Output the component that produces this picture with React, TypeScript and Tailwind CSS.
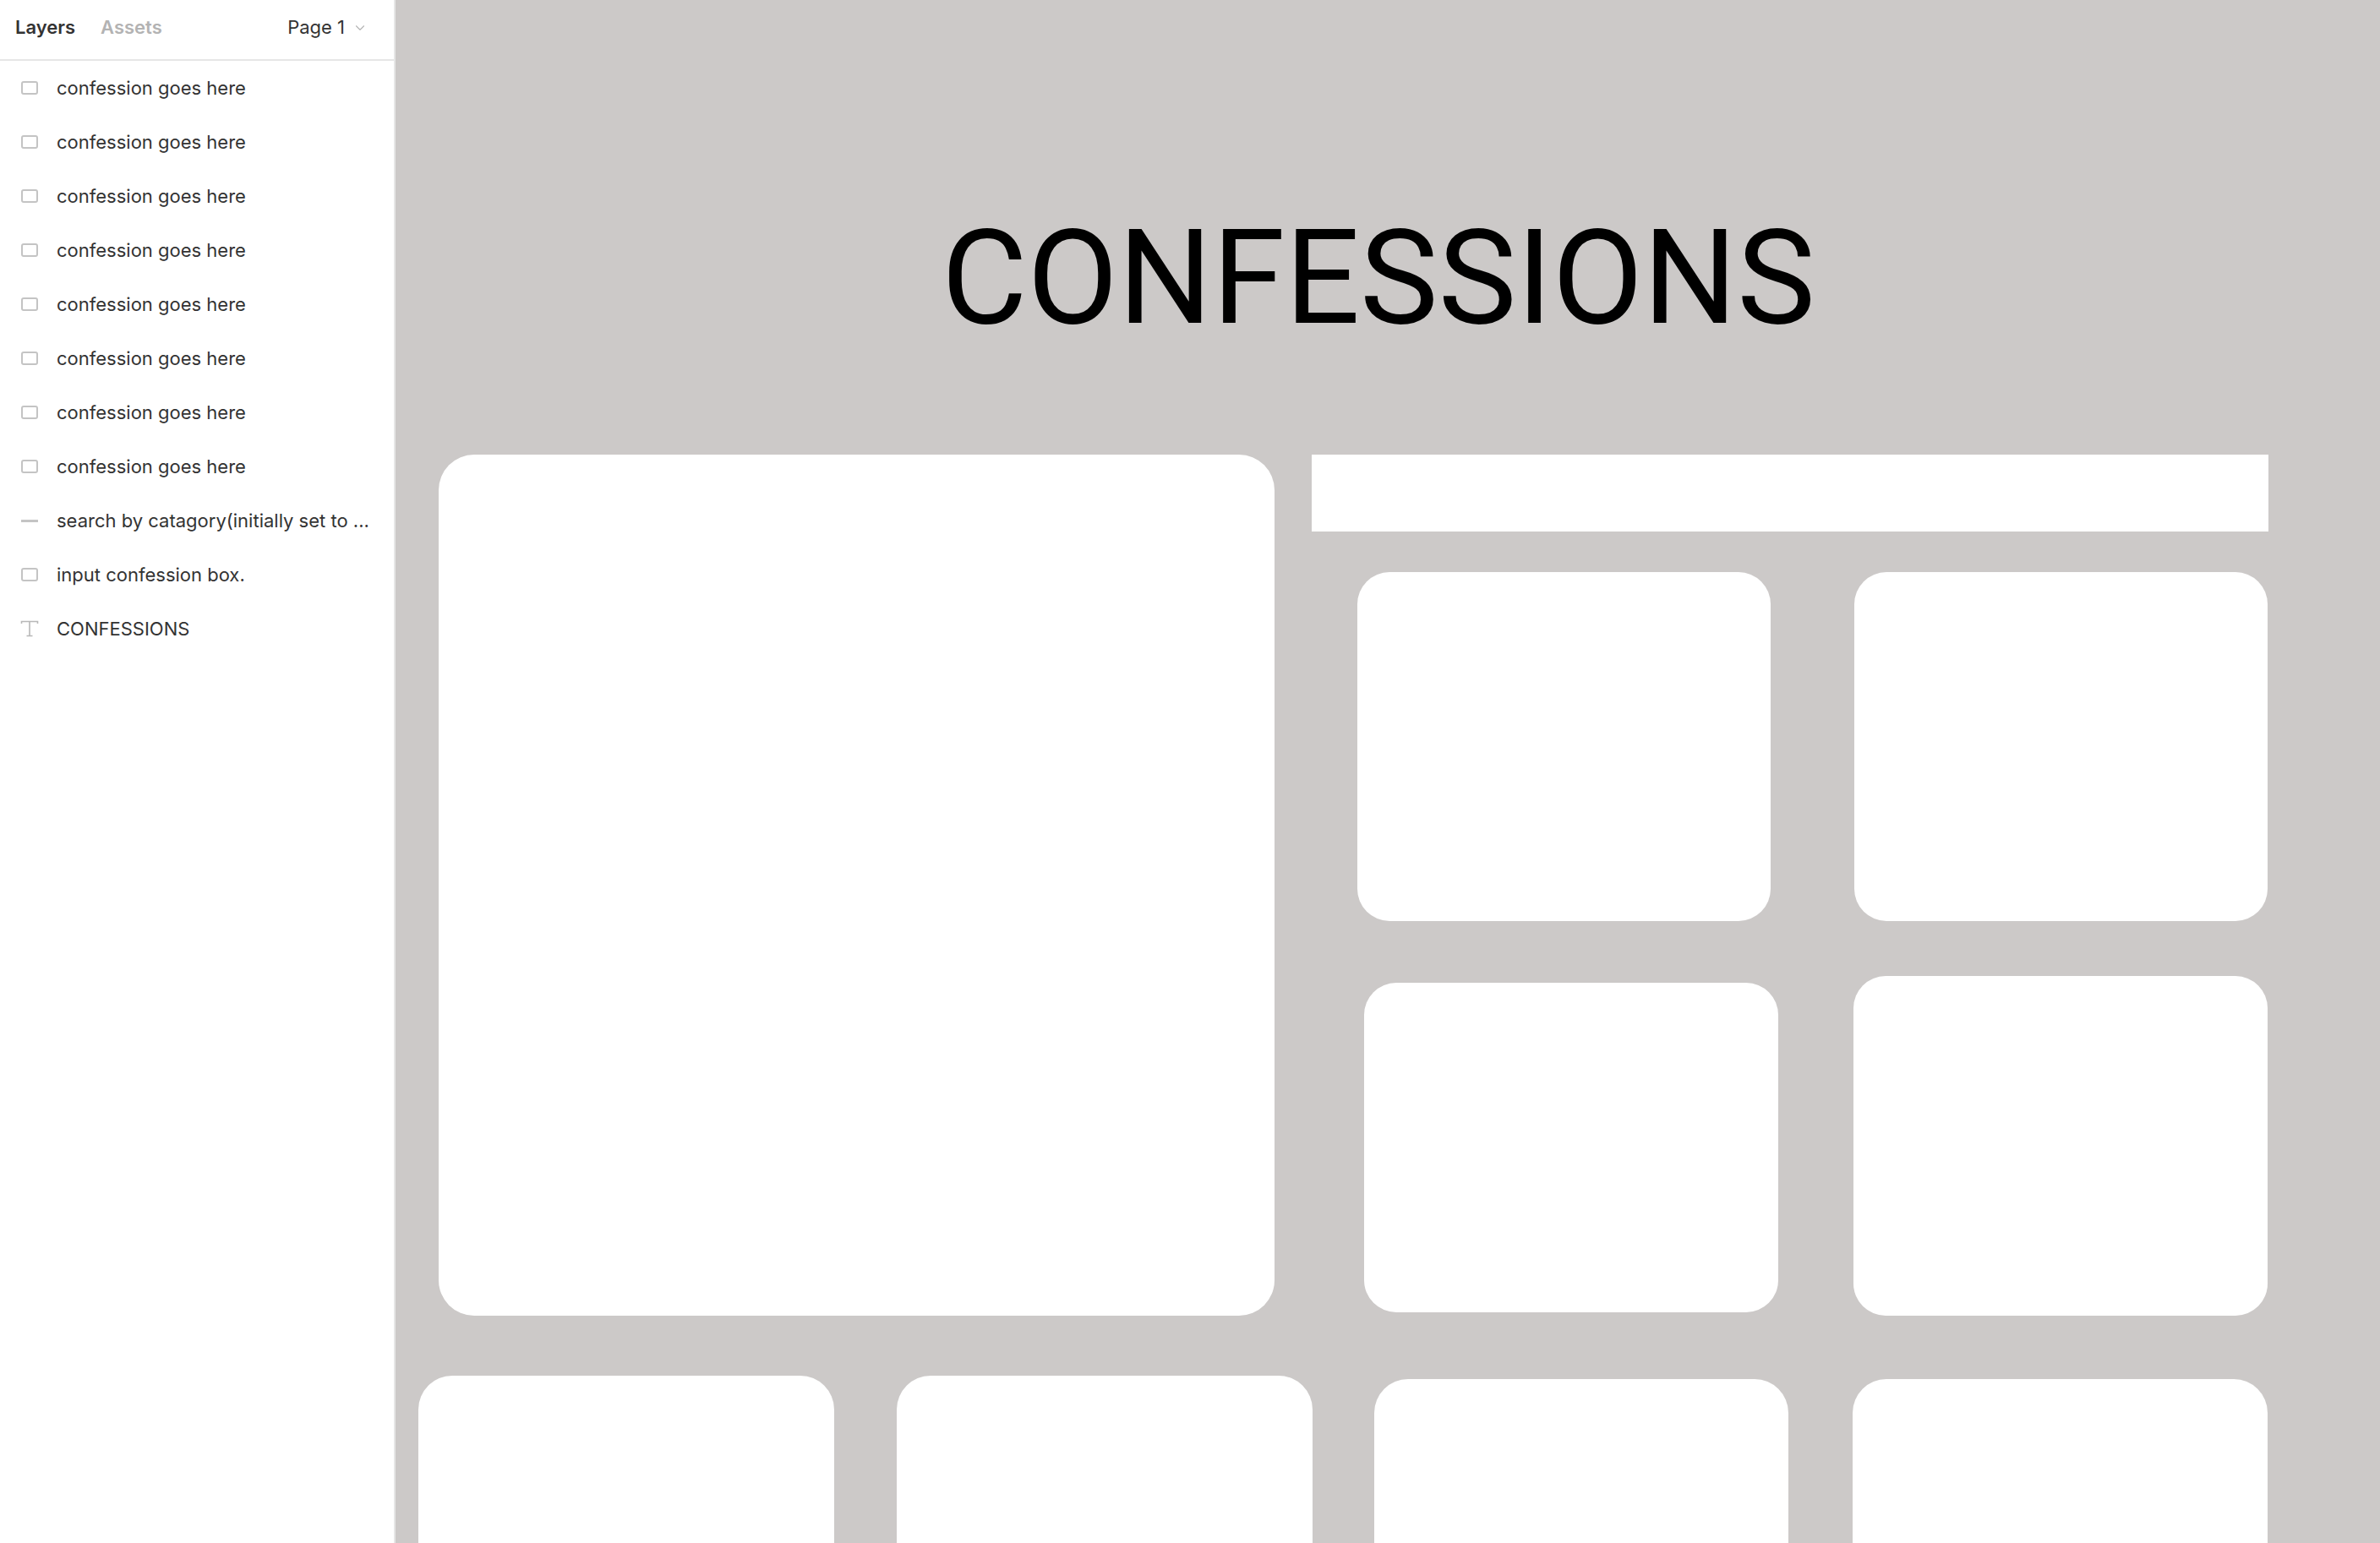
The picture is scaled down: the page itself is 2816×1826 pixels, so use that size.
import { ChevronDown } from "lucide-react";

type Layer = { kind: "frame" | "line" | "text"; name: string };

const layers: Layer[] = [
  ...Array.from({ length: 8 }, () => ({ kind: "frame" as const, name: "confession goes here" })),
  { kind: "line", name: "search by catagory(initially set to ..." },
  { kind: "frame", name: "input confession box." },
  { kind: "text", name: "CONFESSIONS" },
];

const LayerIcon = ({ kind }: { kind: Layer["kind"] }) => {
  if (kind === "line") return <div className="w-[20px] h-[3px] bg-[#c4c4c4]" />;
  if (kind === "text")
    return (
      <svg width="22" height="20" viewBox="0 0 22 20" fill="none" stroke="#b8b8b8" strokeWidth="1.6">
        <path d="M1.5 4V1.5h19V4M11 1.5v17M7.5 18.5h7" />
      </svg>
    );
  return <div className="w-[20px] h-[16px] rounded-[3px] border-2 border-[#c4c4c4]" />;
};

const Card = ({ className }: { className: string }) => <div className={`bg-white shrink-0 ${className}`} />;

export default function App() {
  return (
    <div className="flex w-full h-[1826px] overflow-hidden font-['Inter',sans-serif]">
      {/* layers panel */}
      <aside className="w-[468px] shrink-0 bg-white border-r-2 border-[#e6e6e6]">
        <div className="h-[72px] border-b-2 border-[#e6e6e6] flex items-center pb-[6px] pl-[18px] pr-[31px] text-[22px]">
          <span className="font-semibold text-[#333]">Layers</span>
          <span className="font-semibold text-[#b3b3b3] ml-[30px]">Assets</span>
          <span className="ml-auto text-[#333]">Page 1</span>
          <ChevronDown size={18} strokeWidth={1.5} className="text-[#b3b3b3] ml-[9px] mt-[2px]" />
        </div>
        <ul>
          {layers.map((l, i) => (
            <li key={i} className="h-[64px] flex items-center pl-[24px] text-[22px] text-[#333]">
              <div className="w-[22px] flex justify-center">
                <LayerIcon kind={l.kind} />
              </div>
              <span className="ml-[21px] whitespace-nowrap">{l.name}</span>
            </li>
          ))}
        </ul>
      </aside>

      {/* canvas */}
      <main className="flex-1 bg-[#ccc9c8] overflow-hidden">
        <h1 className="h-[407px] pt-[251px] pr-[22px] text-center font-['Roboto',sans-serif] text-[156px] leading-none font-normal text-black">
          CONFESSIONS
        </h1>

        <div className="flex items-start mt-[131px] pl-[51px]">
          <Card className="w-[989px] h-[1019px] rounded-[42px]" />
          <div className="ml-[44px] w-[1132px]">
            <Card className="w-full h-[91px]" />
            <div className="flex items-start mt-[48px]">
              <Card className="ml-[54px] w-[489px] h-[413px] rounded-[38px]" />
              <Card className="ml-[99px] w-[489px] h-[413px] rounded-[38px]" />
            </div>
            <div className="flex items-start mt-[65px]">
              <Card className="mt-[8px] ml-[62px] w-[490px] h-[390px] rounded-[38px]" />
              <Card className="ml-[89px] w-[490px] h-[402px] rounded-[38px]" />
            </div>
          </div>
        </div>

        <div className="flex items-start mt-[71px] pl-[27px]">
          <Card className="w-[492px] h-[320px] rounded-[40px]" />
          <Card className="ml-[74px] w-[492px] h-[320px] rounded-[40px]" />
          <Card className="mt-[4px] ml-[73px] w-[490px] h-[320px] rounded-[40px]" />
          <Card className="mt-[4px] ml-[76px] w-[491px] h-[320px] rounded-[40px]" />
        </div>
      </main>
    </div>
  );
}
